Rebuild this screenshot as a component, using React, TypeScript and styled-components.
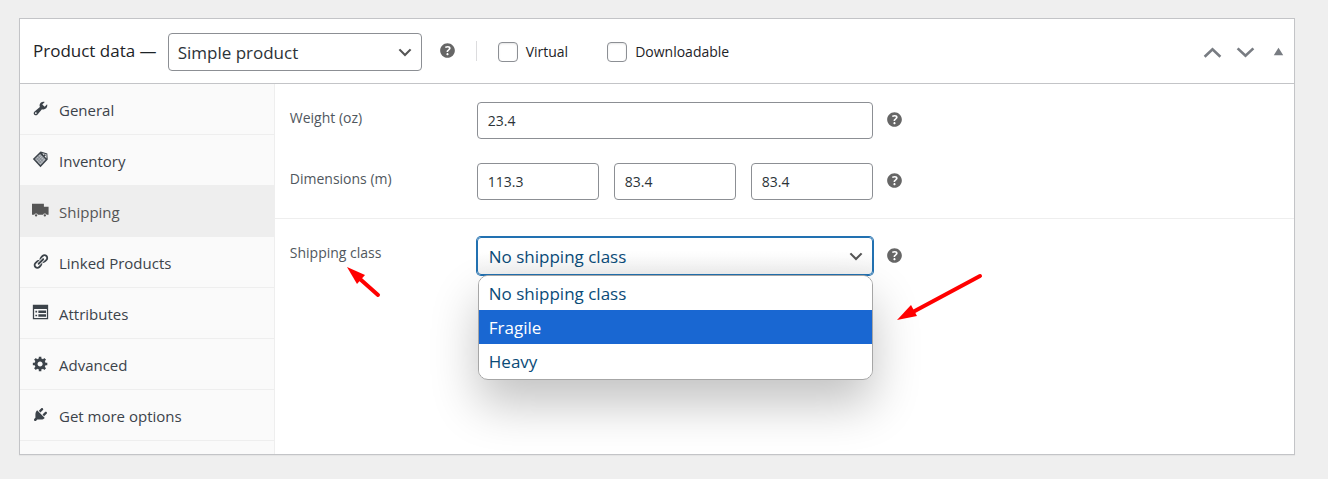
import React, { useState } from 'react';
import styled, { createGlobalStyle, css } from 'styled-components';

const GlobalStyle = createGlobalStyle`
  *, *::before, *::after { box-sizing: border-box; }
  body {
    margin: 0;
    background: #efefef;
    color: #1d2327;
    font-family: "Open Sans", "Noto Sans", sans-serif;
    font-size: 14px;
    line-height: 20px;
  }
`;

const Page = styled.main`
  padding: 18px 33px 24px 19px;
`;

const Panel = styled.section`
  border: 1px solid #c3c4c7;
  background: #fff;
  box-shadow: 0 1px 1px rgba(0, 0, 0, 0.04);
`;

const Header = styled.header`
  display: flex;
  align-items: center;
  height: 65px;
  padding: 0 5px 0 13px;
  border-bottom: 1px solid #c3c4c7;
`;

const Title = styled.h2`
  margin: 0 11px 0 0;
  font-size: 17px;
  font-weight: 400;
  white-space: nowrap;
`;

const SelectBox = styled.span`
  position: relative;
  display: flex;
  align-items: center;
`;

const Select = styled.select<{ $active?: boolean }>`
  appearance: none;
  width: 100%;
  height: 38px;
  margin: 0;
  padding: 1px 32px 0 9px;
  border: 1px solid #8c8f94;
  border-radius: 4px;
  background: #fff;
  color: #2c3338;
  font: inherit;
  font-size: 17px;
  outline: none;
  ${(p) =>
    p.$active &&
    css`
      padding-left: 11px;
      border-color: #2271b1;
      color: #0a4b78;
      box-shadow: 0 0 0 1px #2271b1;
      background: linear-gradient(#fff 40%, #f1f1f1);
    `}
`;

const SelectArrow = styled.svg`
  position: absolute;
  right: 9px;
  width: 16px;
  height: 16px;
  fill: #555;
  pointer-events: none;
`;

const TypeSelect = styled(SelectBox)`
  width: 254px;
  margin-top: 2px;
`;

const HelpButton = styled.button`
  display: flex;
  padding: 0 0 2px;
  border: 0;
  background: none;
  color: #666;
  cursor: help;
`;

const Options = styled.div`
  display: flex;
  align-items: center;
  gap: 39px;
  height: 20px;
  margin-left: 18px;
  padding-left: 21px;
  border-left: 1px solid #dcdcde;
`;

const CheckLabel = styled.label`
  display: flex;
  align-items: center;
  gap: 8px;
  padding-top: 2px;
`;

const Checkbox = styled.input`
  appearance: none;
  width: 20px;
  height: 20px;
  margin: 0;
  border: 1px solid #8c8f94;
  border-radius: 4px;
  background: #fff;
  box-shadow: inset 0 1px 2px rgba(0, 0, 0, 0.1);
`;

const PanelActions = styled.div`
  display: flex;
  align-items: center;
  gap: 12px;
  margin-left: auto;
`;

const IconButton = styled.button`
  display: flex;
  padding: 0;
  border: 0;
  background: none;
  color: #787c82;
`;

const Body = styled.div`
  display: flex;
  min-height: 370px;
`;

const Tabs = styled.nav`
  flex: 0 0 20%;
  border-right: 1px solid #eee;
  background: #fafafa;
`;

const TabList = styled.ul`
  margin: 0;
  padding: 0;
  list-style: none;
`;

const Tab = styled.a<{ $active?: boolean }>`
  display: flex;
  align-items: center;
  gap: 10px;
  height: 51px;
  padding: 2px 12px 0;
  border-bottom: 1px solid #eee;
  background: ${(p) => (p.$active ? '#eee' : 'transparent')};
  color: ${(p) => (p.$active ? '#555' : '#3c434a')};
  font-size: 15px;
  text-decoration: none;

  svg {
    flex: none;
    margin-bottom: 4px;
  }
`;

const Fields = styled.div`
  flex: 1;
  min-width: 0;
`;

const Group = styled.div`
  display: grid;
  gap: 24px;
  padding: 18px 15px;

  & + & {
    border-top: 1px solid #eee;
  }
`;

const Field = styled.div`
  display: grid;
  grid-template-columns: 187px minmax(0, 396px) auto;
  align-items: center;
  justify-content: start;
`;

const FieldLabel = styled.label`
  align-self: start;
  padding-top: 6px;
  color: #50575e;
`;

const FieldHelp = styled.div`
  margin-left: 11px;
`;

const HeaderHelp = styled.div`
  margin-left: 15px;
`;

const TextInput = styled.input`
  width: 100%;
  min-width: 0;
  height: 37px;
  padding: 0 10px;
  border: 1px solid #8c8f94;
  border-radius: 4px;
  background: #fff;
  color: #2c3338;
  font: inherit;
`;

const InputRow = styled.div`
  display: grid;
  grid-template-columns: repeat(3, 1fr);
  gap: 15px;
`;

const Dropdown = styled.div`
  position: relative;
`;

const Menu = styled.ul`
  position: absolute;
  top: 100%;
  left: 1px;
  right: 0;
  margin: 0;
  padding: 0 0 1px;
  overflow: hidden;
  border: 1px solid #a6a6a6;
  border-radius: 10px;
  background: #fff;
  box-shadow: 0 24px 48px rgba(0, 0, 0, 0.24);
  list-style: none;
`;

const MenuItem = styled.li<{ $selected?: boolean }>`
  padding: 2px 10px 0;
  background: ${(p) => (p.$selected ? '#1967d2' : '#fff')};
  color: ${(p) => (p.$selected ? '#fff' : '#0a4b78')};
  font-size: 17px;
  line-height: 32px;
`;

const Pointer = styled.svg<{ $left: number; $top: number }>`
  position: absolute;
  left: ${(p) => p.$left}px;
  top: ${(p) => p.$top}px;
  pointer-events: none;
  overflow: visible;
`;

const ICONS = {
  wrench:
    'M16.68 9.77c-1.34 1.34-3.3 1.67-4.95.99l-5.41 6.52c-.99.99-2.59.99-3.58 0s-.99-2.59 0-3.57l6.52-5.42c-.68-1.65-.35-3.61.99-4.95 1.28-1.28 3.12-1.62 4.72-1.06l-2.89 2.89 2.82 2.82 2.86-2.87c.53 1.58.18 3.39-1.08 4.65zM3.81 16.21c.4.39 1.04.39 1.43 0 .4-.4.4-1.04 0-1.43-.39-.4-1.03-.4-1.43 0-.39.39-.39 1.03 0 1.43z',
  link:
    'M17.74 2.76c1.68 1.69 1.68 4.41 0 6.1l-1.53 1.52c-1.12 1.12-2.7 1.47-4.14 1.09l2.62-2.61.76-.77.76-.76c.84-.84.84-2.2 0-3.04-.84-.85-2.2-.85-3.04 0l-.77.76-3.38 3.38c-.37-1.44-.02-3.02 1.1-4.14l1.52-1.53c1.69-1.68 4.42-1.68 6.1 0zM8.59 13.43l5.34-5.34c.42-.42.42-1.1 0-1.52-.44-.43-1.13-.39-1.53 0l-5.33 5.34c-.42.42-.42 1.1 0 1.52.44.43 1.13.39 1.52 0zm-.76 2.29l4.14-4.15c.38 1.44.03 3.02-1.09 4.14l-1.52 1.53c-1.69 1.68-4.41 1.68-6.1 0-1.68-1.68-1.68-4.42 0-6.1l1.53-1.52c1.12-1.12 2.7-1.47 4.14-1.1l-4.14 4.15c-.85.84-.85 2.2 0 3.05.84.84 2.2.84 3.04 0z',
  gear:
    'M18 12h-2.18c-.17.7-.44 1.35-.81 1.93l1.54 1.54-2.1 2.1-1.54-1.54c-.58.36-1.23.63-1.91.79V19H8v-2.18c-.68-.16-1.33-.43-1.91-.79l-1.54 1.54-2.12-2.12 1.54-1.54c-.36-.58-.63-1.23-.79-1.91H1V9.03h2.17c.16-.7.44-1.35.8-1.94L2.43 5.55l2.1-2.1 1.54 1.54c.58-.37 1.24-.64 1.93-.81V2h3v2.18c.68.16 1.33.43 1.91.79l1.54-1.54 2.12 2.12-1.54 1.54c.36.59.64 1.24.8 1.94H18V12zm-8.5 1.5c1.66 0 3-1.34 3-3s-1.34-3-3-3-3 1.34-3 3 1.34 3 3 3z',
  plug:
    'M13.11 4.36L9.87 7.6 8 5.73l3.24-3.24c.35-.34 1.05-.2 1.56.32.52.51.66 1.21.31 1.55zm-8 1.77l.91-1.12 9.01 9.01-1.19.84c-.71.71-2.63 1.16-3.82 1.16H6.14L4.9 17.26c-.59.59-1.54.59-2.12 0-.59-.58-.59-1.53 0-2.12l1.24-1.24v-3.88c0-1.13.4-3.19 1.09-3.89zm7.26 3.97l3.24-3.24c.34-.35 1.04-.21 1.55.31.52.51.66 1.21.31 1.55l-3.24 3.25z',
  truck:
    'M0 2h14v3.500h5.500V15h-2.300a2.200 2.200 0 0 0-4.200 0H6.900a2.200 2.200 0 0 0-4.200 0H0zM4.800 14.300a1.400 1.400 0 1 1 0 2.800 1.400 1.400 0 0 1 0-2.800zm10.300 0a1.400 1.400 0 1 1 0 2.800 1.400 1.400 0 0 1 0-2.800z',
  form:
    'M1 1h18v17H1zM2.500 6v10.500h15V6zM4 8h2v2H4zm3.500-.500h9v3h-9zM4 12.500h2v2H4zm3.500-.500h9v3h-9z',
};

const Glyph = ({ d }: { d: string }) => (
  <svg width="17" height="17" viewBox="0 0 20 20" fill="currentColor" fillRule="evenodd" aria-hidden="true">
    <path d={d} />
  </svg>
);

const InventoryGlyph = () => (
  <svg width="17" height="17" viewBox="0 0 20 20" aria-hidden="true">
    <path d="M1 9.500 10 .500l1.500.500 6.500 2 .500 7-8.500 9z" fill="#3c434a" />
    <path d="m3.500 9.500 6-6 6.500 6.500-6 6.500z" fill="#b9bdc2" />
    <path d="m5 11 6-6M6.700 12.700l6-6M8.400 14.400l6-6M5.200 8l6 6.500M7 6l6 6.500" stroke="#777e86" strokeWidth="1" />
    <path d="m12 2.500 5 1.300v5z" fill="#fafafa" />
    <circle cx="15" cy="5" r="1.200" fill="#3c434a" />
  </svg>
);

const Help = ({ topic }: { topic: string }) => (
  <HelpButton type="button" aria-label={`Help: ${topic}`}>
    <svg width="21" height="21" viewBox="0 0 20 20" fill="currentColor" aria-hidden="true">
      <path d="M17 10c0-3.87-3.14-7-7-7-3.87 0-7 3.13-7 7s3.13 7 7 7c3.86 0 7-3.13 7-7zm-6.3 1.48H9.14v-.43c0-.38.08-.7.24-.98s.46-.57.88-.89c.41-.29.68-.53.81-.71.14-.18.2-.39.2-.62 0-.25-.09-.44-.28-.58-.19-.13-.45-.19-.79-.19-.58 0-1.25.19-2 .57l-.64-1.28c.87-.49 1.8-.74 2.77-.74.81 0 1.45.2 1.92.58.48.39.71.91.71 1.55 0 .43-.09.8-.29 1.11-.19.32-.57.67-1.11 1.06-.38.28-.61.49-.71.63-.1.15-.15.34-.15.57v.35zm-1.47 2.74c-.18-.17-.27-.42-.27-.73 0-.33.08-.58.26-.75s.43-.25.77-.25c.32 0 .57.09.75.26s.27.42.27.74c0 .3-.09.55-.27.72-.18.18-.43.27-.75.27-.33 0-.58-.09-.76-.26z" />
    </svg>
  </HelpButton>
);

const Chevron = () => (
  <SelectArrow viewBox="0 0 20 20" aria-hidden="true">
    <path d="M4 6l6 6 6-6 2 1.500-8 8-8-8 2-1.500z" />
  </SelectArrow>
);

const TABS = [
  { name: 'General', icon: <Glyph d={ICONS.wrench} /> },
  { name: 'Inventory', icon: <InventoryGlyph /> },
  { name: 'Shipping', icon: <Glyph d={ICONS.truck} /> },
  { name: 'Linked Products', icon: <Glyph d={ICONS.link} /> },
  { name: 'Attributes', icon: <Glyph d={ICONS.form} /> },
  { name: 'Advanced', icon: <Glyph d={ICONS.gear} /> },
  { name: 'Get more options', icon: <Glyph d={ICONS.plug} /> },
];

const CLASSES = ['No shipping class', 'Fragile', 'Heavy'];

export default function App() {
  const [highlighted, setHighlighted] = useState('Fragile');

  return (
    <Page>
      <GlobalStyle />
      <Panel>
        <Header>
          <Title>
            <label htmlFor="product-type">Product data —</label>
          </Title>
          <TypeSelect>
            <Select id="product-type">
              <option>Simple product</option>
            </Select>
            <Chevron />
          </TypeSelect>
          <HeaderHelp>
            <Help topic="product type" />
          </HeaderHelp>
          <Options>
            <CheckLabel>
              <Checkbox type="checkbox" />
              Virtual
            </CheckLabel>
            <CheckLabel>
              <Checkbox type="checkbox" />
              Downloadable
            </CheckLabel>
          </Options>
          <PanelActions>
            <IconButton type="button" aria-label="Move up">
              <svg width="21" height="21" viewBox="0 0 20 20" fill="none" stroke="currentColor" strokeWidth="2.500">
                <path d="m2.500 15 7.500-7 7.500 7" />
              </svg>
            </IconButton>
            <IconButton type="button" aria-label="Move down">
              <svg width="21" height="21" viewBox="0 0 20 20" fill="none" stroke="currentColor" strokeWidth="2.500">
                <path d="m2.500 7 7.500 7 7.500-7" />
              </svg>
            </IconButton>
            <IconButton type="button" aria-label="Toggle panel">
              <svg width="21" height="21" viewBox="0 0 20 20" fill="currentColor">
                <path d="M5.500 13.500 10 6.500l4.500 7z" />
              </svg>
            </IconButton>
          </PanelActions>
        </Header>
        <Body>
          <Tabs>
            <TabList>
              {TABS.map((tab) => (
                <li key={tab.name}>
                  <Tab href="#" $active={tab.name === 'Shipping'}>
                    {tab.icon}
                    {tab.name}
                  </Tab>
                </li>
              ))}
            </TabList>
          </Tabs>
          <Fields>
            <Group>
              <Field>
                <FieldLabel htmlFor="weight">Weight (oz)</FieldLabel>
                <TextInput id="weight" defaultValue="23.4" />
                <FieldHelp>
                  <Help topic="weight" />
                </FieldHelp>
              </Field>
              <Field>
                <FieldLabel htmlFor="length">Dimensions (m)</FieldLabel>
                <InputRow>
                  <TextInput id="length" defaultValue="113.3" />
                  <TextInput aria-label="Width" defaultValue="83.4" />
                  <TextInput aria-label="Height" defaultValue="83.4" />
                </InputRow>
                <FieldHelp>
                  <Help topic="dimensions" />
                </FieldHelp>
              </Field>
            </Group>
            <Group>
              <Field>
                <FieldLabel htmlFor="shipping-class">Shipping class</FieldLabel>
                <Dropdown>
                  <SelectBox>
                    <Select id="shipping-class" $active>
                      {CLASSES.map((name) => (
                        <option key={name}>{name}</option>
                      ))}
                    </Select>
                    <Chevron />
                  </SelectBox>
                  <Menu role="listbox" aria-label="Shipping class">
                    {CLASSES.map((name) => (
                      <MenuItem
                        key={name}
                        role="option"
                        aria-selected={name === highlighted}
                        $selected={name === highlighted}
                        onMouseEnter={() => setHighlighted(name)}
                      >
                        {name}
                      </MenuItem>
                    ))}
                  </Menu>
                  <Pointer $left={-130} $top={30} width="34" height="32" aria-hidden="true">
                    <path d="M31 28 13 12" stroke="#f00" strokeWidth="4" strokeLinecap="round" />
                    <path d="m0 0 18 8-8 9z" fill="#f00" />
                  </Pointer>
                  <Pointer $left={420} $top={37} width="86" height="48" aria-hidden="true">
                    <path d="M83 2 14 39" stroke="#f00" strokeWidth="4" strokeLinecap="round" />
                    <path d="m0 46 14-15 6 11z" fill="#f00" />
                  </Pointer>
                </Dropdown>
                <FieldHelp>
                  <Help topic="shipping class" />
                </FieldHelp>
              </Field>
            </Group>
          </Fields>
        </Body>
      </Panel>
    </Page>
  );
}
